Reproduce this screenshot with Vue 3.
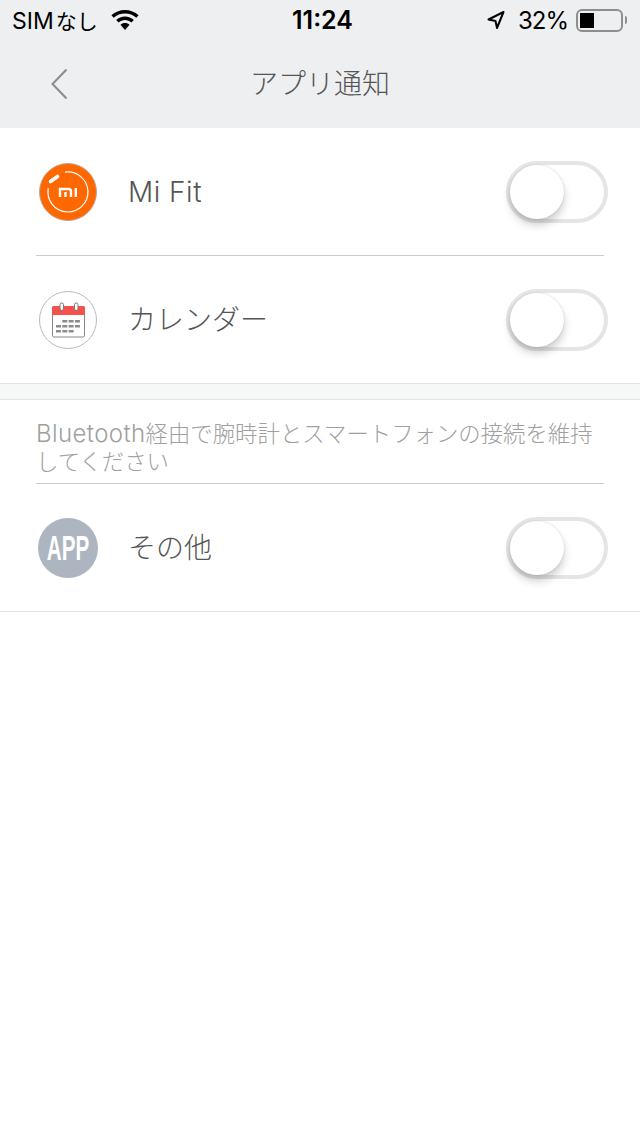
<script setup>
const topRows = [
  { name: 'Mi Fit', icon: 'mi' },
  { name: 'カレンダー', icon: 'cal' }
]
const calDots = [
  [24.3, 30], [30.6, 30], [36.9, 30],
  [18, 35], [24.3, 35], [30.6, 35], [36.9, 35],
  [18, 40], [24.3, 40], [30.6, 40]
]
</script>

<template>
  <div class="page">
    <header class="head">
      <div class="status">
        <div class="status-left">
          <span class="carrier">SIM<span class="carrier-jp">なし</span></span>
          <svg class="wifi" width="28" height="20" viewBox="0 0 28 20">
            <path d="M14 0C8.700 0 4 2 .4 5.300l2.300 2.500C5.700 5 9.600 3.500 14 3.500s8.300 1.500 11.300 4.300l2.300-2.500C24 2 19.300 0 14 0z" />
            <path d="M14 6.500c-3.400 0-6.500 1.300-8.800 3.400l2.400 2.500c1.700-1.500 4-2.400 6.400-2.400s4.700.9 6.400 2.400l2.400-2.500C20.500 7.800 17.400 6.500 14 6.500z" />
            <path d="M14 13c-1.800 0-3.300.7-4.500 1.700L14 20l4.500-5.300C17.300 13.700 15.800 13 14 13z" />
          </svg>
        </div>
        <span class="time">11:24</span>
        <div class="status-right">
          <svg class="arrow" width="18" height="20" viewBox="0 0 18 20">
            <path d="M16.500 2 1.500 9.500l7 1.500 1.500 7z" fill="none" stroke="#000" stroke-width="2" stroke-linejoin="round" />
          </svg>
          <span class="pct">32%</span>
          <div class="battery">
            <div class="battery-body"><div class="battery-fill"></div></div>
            <div class="battery-tip"></div>
          </div>
        </div>
      </div>
      <div class="nav">
        <svg class="back" width="16" height="30" viewBox="0 0 16 30">
          <path d="M15.500 .5 1.500 15l14 14.500" fill="none" stroke="#8a8a8a" stroke-width="2" />
        </svg>
        <span class="title">アプリ通知</span>
      </div>
    </header>

    <section class="group">
      <div v-for="row in topRows" :key="row.name" class="row-wrap">
        <div class="row">
          <svg v-if="row.icon === 'mi'" class="icon" width="60" height="60" viewBox="0 0 60 60">
            <circle cx="30" cy="30" r="28.500" fill="#ff6700" stroke="#c4a491" stroke-width="1" />
            <path d="M27 10.200a20 20 0 1 1-16.700 16" fill="none" stroke="#fff" stroke-width="1.200" />
            <path d="M12.500 19.500 19.500 14.500" stroke="#fff" stroke-width="3.600" stroke-linecap="round" />
            <path d="M22 35v-8h8.500a2.500 2.500 0 0 1 2.500 2.500V35M27.500 30v5M37.800 26v9" fill="none" stroke="#fff" stroke-width="2.400" />
          </svg>
          <svg v-else class="icon" width="60" height="60" viewBox="0 0 60 60">
            <circle cx="30" cy="30" r="28.500" fill="#fff" stroke="#bbb" stroke-width="1" />
            <rect x="14.500" y="16.500" width="32" height="30.500" rx="1.500" fill="#fff" stroke="#888" stroke-width="1" />
            <path d="M14 25v-7a2 2 0 0 1 2-2h29a2 2 0 0 1 2 2v7z" fill="#f4524a" />
            <rect x="22" y="13" width="3.500" height="7.500" rx="1.700" fill="#fff" stroke="#777" stroke-width="1" />
            <rect x="36.500" y="13" width="3.500" height="7.500" rx="1.700" fill="#fff" stroke="#777" stroke-width="1" />
            <rect v-for="d in calDots" :key="d.join()" :x="d[0]" :y="d[1]" width="5" height="2.500" fill="#8c8c8c" />
          </svg>
          <span class="label" :class="{ 'label-latin': row.icon === 'mi' }">{{ row.name }}</span>
          <div class="toggle"><div class="knob"></div></div>
        </div>
      </div>
    </section>

    <div class="gap"></div>

    <section class="group-other">
      <p class="note"><span class="note-latin">Bluetooth</span>経由で腕時計とスマートフォンの接続を維持してください</p>
      <div class="row">
        <div class="icon app-icon"><span class="app-text">APP</span></div>
        <span class="label">その他</span>
        <div class="toggle"><div class="knob"></div></div>
      </div>
    </section>
  </div>
</template>

<style scoped>
.page {
  width: 640px;
  height: 1136px;
  overflow: hidden;
  background: #fff;
  font-family: Inter, "Noto Sans CJK JP", sans-serif;
  color: #555;
}

.head {
  height: 128px;
  background: #eeeff1;
}

.status {
  height: 40px;
  padding: 0 13px 0 12px;
  display: flex;
  align-items: center;
  justify-content: space-between;
  color: #000;
  font-size: 24px;
  position: relative;
}

.status-left {
  display: flex;
  align-items: center;
  gap: 13px;
  font-weight: 400;
}

.carrier {
  font-size: 23px;
}

.carrier-jp {
  font-size: 21px;
  margin-left: 2px;
}

.wifi {
  display: block;
}

.time {
  position: absolute;
  left: 292px;
  font-weight: 600;
  font-size: 25px;
}

.status-right {
  display: flex;
  align-items: center;
}

.arrow {
  margin-right: 13px;
}

.pct {
  margin-right: 8px;
  letter-spacing: -1px;
}

.battery {
  display: flex;
  align-items: center;
}

.battery-body {
  width: 47px;
  height: 23px;
  border: 2px solid #8e8e8e;
  border-radius: 6px;
  padding: 2px;
  box-sizing: border-box;
}

.battery-fill {
  width: 14px;
  height: 100%;
  background: #000;
}

.battery-tip {
  width: 2px;
  height: 8px;
  background: #8e8e8e;
  border-radius: 0 2px 2px 0;
  margin-left: 2px;
}

.nav {
  height: 88px;
  padding-bottom: 4px;
  box-sizing: border-box;
  display: flex;
  align-items: center;
  justify-content: center;
  position: relative;
}

.back {
  position: absolute;
  left: 51px;
  top: 29px;
}

.title {
  font-family: "Noto Sans CJK JP", sans-serif;
  font-size: 28px;
  font-weight: 300;
  color: #555;
}

.row-wrap {
  height: 128px;
  margin: 0 36px;
  border-bottom: 1px solid #ccc;
  box-sizing: border-box;
}

.row-wrap:last-child {
  margin: 0;
  padding: 0 36px;
  border-bottom: 1px solid #e2e4e4;
}

.row {
  height: 127px;
  display: flex;
  align-items: center;
  padding-left: 2px;
}

.group-other .row {
  padding: 0 32px 0 38px;
  border-bottom: 1px solid #e2e4e4;
}

.icon {
  flex: none;
  width: 60px;
  height: 60px;
}

.app-icon {
  border-radius: 50%;
  background: #adb5c1;
  color: #fff;
  display: flex;
  align-items: center;
  justify-content: center;
  font-family: "Liberation Sans", sans-serif;
  font-size: 35px;
  font-weight: 700;
}

.app-text {
  display: block;
  transform: scaleX(0.59);
}

.label {
  margin-left: 30px;
  padding-bottom: 3px;
  font-family: Inter, "Noto Sans CJK JP", sans-serif;
  font-size: 28px;
  font-weight: 300;
  flex: 1;
}

.label-latin {
  padding-bottom: 0;
  letter-spacing: 0.5px;
}

.toggle {
  flex: none;
  width: 102px;
  height: 62px;
  border: 4px solid #e5e5e5;
  border-radius: 31px;
  box-sizing: border-box;
  margin-right: -4px;
}

.group-other .toggle {
  margin-right: 0;
}

.knob {
  width: 54px;
  height: 54px;
  border-radius: 50%;
  background: #fff;
  box-shadow: 0 6px 8px rgba(0, 0, 0, 0.2), 0 0 2px rgba(0, 0, 0, 0.15);
}

.gap {
  height: 15px;
  background: #f6f8f8;
}

.group-other {
  border-top: 1px solid #e2e4e4;
}

.note {
  margin: 0 36px;
  height: 84px;
  box-sizing: border-box;
  padding-top: 20px;
  border-bottom: 1px solid #ccc;
  font-family: Inter, "Noto Sans CJK JP", sans-serif;
  font-weight: 300;
  font-size: 22.4px;
  line-height: 28px;
  color: #a0a0a0;
}

.note-latin {
  font-size: 24px;
  letter-spacing: 0.4px;
}
</style>
